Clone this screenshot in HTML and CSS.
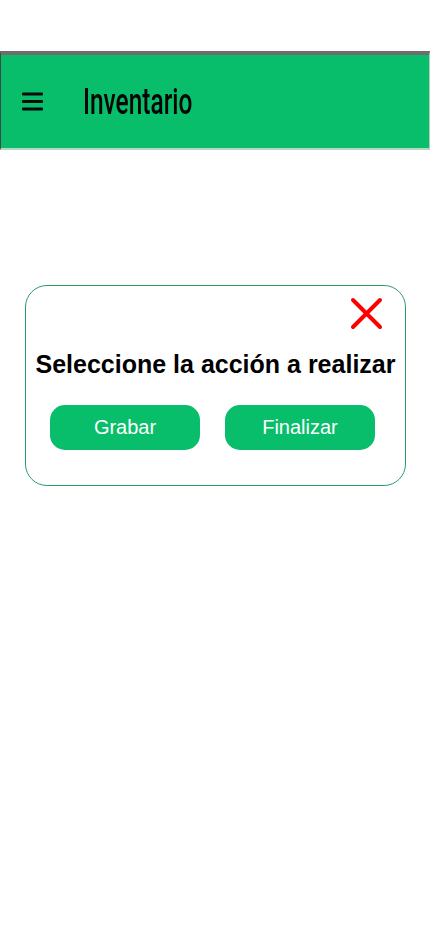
FILE: index.html
```html
<!DOCTYPE html>
<html lang="es">
<head>
<meta charset="utf-8">
<title>Inventario</title>
<link rel="stylesheet" href="styles.css">
</head>
<body>
<div class="top-space"></div>
<header class="appbar">
  <svg class="menu-icon" width="21" height="19" viewBox="0 0 21 19" aria-hidden="true">
    <rect x="0" y="0.5" width="21" height="3" rx="1" fill="#0a0a0a"/>
    <rect x="0" y="8" width="21" height="3" rx="1" fill="#0a0a0a"/>
    <rect x="0" y="15.5" width="21" height="3" rx="1" fill="#0a0a0a"/>
  </svg>
  <h1 class="title">Inventario</h1>
</header>
<main class="content">
  <div class="dialog">
    <div class="dialog-close-row">
      <svg class="close-icon" width="33" height="33" viewBox="0 0 33 33" aria-label="Cerrar">
        <path d="M3 3 L30 30 M30 3 L3 30" stroke="#ff0000" stroke-width="4" stroke-linecap="round" fill="none"/>
      </svg>
    </div>
    <p class="dialog-title">Seleccione la acción a realizar</p>
    <div class="dialog-actions">
      <button class="btn">Grabar</button>
      <button class="btn">Finalizar</button>
    </div>
  </div>
</main>
</body>
</html>
```

FILE: styles.css
```css
html, body {
  margin: 0;
  padding: 0;
  background: #ffffff;
}

body {
  width: 430px;
  min-height: 932px;
  font-family: "Liberation Sans", Arial, sans-serif;
}

.top-space {
  height: 51px;
}

.appbar {
  height: 93px;
  box-sizing: content-box;
  background: #08be6a;
  border-top: 4px solid #6e6e6e;
  border-left: 1px solid #3a4a44;
  border-right: 1px solid #b9c9c1;
  border-bottom: 2px solid #b3d8c4;
  display: flex;
  align-items: center;
  padding-left: 21px;
}

.menu-icon {
  display: block;
  flex: none;
  filter: blur(0.4px);
}

.title {
  margin: 0 0 0 40px;
  font-family: Roboto, "Liberation Sans", sans-serif;
  font-weight: 500;
  font-size: 36px;
  line-height: 40px;
  color: #050505;
  transform: scaleX(0.68);
  transform-origin: left center;
  filter: blur(0.5px);
  white-space: nowrap;
}

.content {
  padding: 135px 0 0 25px;
}

.dialog {
  width: 381px;
  box-sizing: border-box;
  border: 1px solid #2a9c66;
  border-radius: 22px;
  padding: 11px 22px 35px 24px;
  display: flex;
  flex-direction: column;
}

.dialog-close-row {
  display: flex;
  justify-content: flex-end;
}

.close-icon {
  display: block;
}

.dialog-title {
  margin: 20px -22px 0 -24px;
  font-size: 25px;
  line-height: 28px;
  font-weight: 700;
  color: #000000;
  text-align: center;
  white-space: nowrap;
}

.dialog-actions {
  display: flex;
  gap: 25px;
  margin-top: 27px;
}

.btn {
  width: 150px;
  height: 45px;
  border: none;
  border-radius: 15px;
  background: #08be6a;
  color: #ffffff;
  font-family: "Liberation Sans", Arial, sans-serif;
  font-size: 20px;
  padding: 0;
  cursor: pointer;
}
```
